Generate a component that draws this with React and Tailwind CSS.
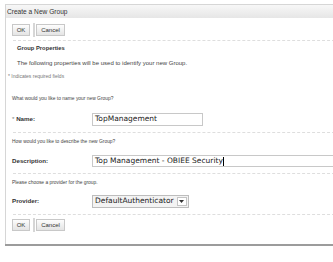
import React from 'react';

const Btn = ({ children, className = '' }) => (
  <button
    className={`h-[12px] border border-[#c8c8c8] bg-gradient-to-b from-[#fdfdfd] to-[#e4e4e4] text-[6px] leading-none text-[#333] ${className}`}
  >
    {children}
  </button>
);

const Buttons = () => (
  <div className="flex items-center h-[14px] pl-[6px]">
    <Btn className="w-[18px]">OK</Btn>
    <div className="w-[2px] h-[14px] bg-[#d6d6d6] ml-[3px] mr-[1px]" />
    <Btn className="w-[29px]">Cancel</Btn>
  </div>
);

const Dashed = ({ className = '' }) => (
  <div className={`h-0 border-t border-dashed border-[#dedede] ml-[7px] ${className}`} />
);

const Line = ({ children, className = '' }) => (
  <div className={`h-[10px] leading-[10px] whitespace-nowrap ${className}`}>{children}</div>
);

const Field = ({ label, children, className = '' }) => (
  <div className={`flex items-center h-[14px] pl-[6px] ${className}`}>
    <div className="w-[80px] text-[6.2px] font-bold text-[#333] whitespace-nowrap">{label}</div>
    {children}
  </div>
);

const App = () => {
  return (
    <div className="w-[333px] h-[262px] bg-white overflow-hidden font-['Liberation_Sans',Arial,sans-serif] text-[#333]">
      <div className="ml-[5px] mt-[4px] w-[340px] border-l border-t border-[#d6d6d6] pb-[12px] shadow-[0_2px_0_#9c9c9c]">
        <div className="h-[13px] bg-gradient-to-b from-[#f7f7f7] to-[#e6e6e6] flex items-center pl-[1px] text-[6.6px] text-[#333] whitespace-nowrap">
          Create a New Group
        </div>
        <div className="pt-[5px]">
          <Buttons />
        </div>
        <Dashed className="mt-[3px]" />

        <Line className="mt-[2px] pl-[11px] text-[5.8px] font-bold">Group Properties</Line>
        <Line className="mt-[5px] pl-[11px] text-[6px] text-[#444]">
          The following properties will be used to identify your new Group.
        </Line>
        <Line className="mt-[3px] pl-[2px] text-[5px] text-[#777]">* Indicates required fields</Line>

        <Line className="mt-[13px] pl-[6px] text-[4.9px] text-[#444]">
          What would you like to name your new Group?
        </Line>
        <Field
          className="mt-[8px]"
          label={
            <>
              <span className="font-normal text-[#777]">* </span>Name:
            </>
          }
        >
          <div className="w-[111px] h-[13px] border border-[#c8c8c8] flex items-center pl-[2px] text-[7.5px] font-['DejaVu_Sans',sans-serif] text-[#222] whitespace-nowrap">
            TopManagement
          </div>
        </Field>
        <Dashed className="mt-[6px]" />

        <Line className="mt-[4px] pl-[6px] text-[4.9px] text-[#444]">
          How would you like to describe the new Group?
        </Line>
        <Field className="mt-[7px]" label="Description:">
          <div className="flex-1 h-[12px] border border-[#c8c8c8] flex items-center pl-[2px] text-[7.5px] font-['DejaVu_Sans',sans-serif] text-[#222] whitespace-nowrap">
            Top Management - OBIEE Security
            <span className="inline-block w-px h-[9px] bg-black" />
          </div>
        </Field>
        <Dashed className="mt-[5px]" />

        <Line className="mt-[4px] pl-[6px] text-[4.9px] text-[#444]">
          Please choose a provider for the group.
        </Line>
        <Field className="mt-[6px]" label="Provider:">
          <div className="h-[13px] border border-[#bdbdbd] bg-[#f3f3f3] flex items-center pl-[2px] text-[7.5px] font-['DejaVu_Sans',sans-serif] text-[#222] whitespace-nowrap">
            DefaultAuthenticator
            <span className="ml-[3px] mr-[1px] w-[10px] h-[9px] border border-[#c4c4c4] bg-white flex items-center justify-center">
              <svg width="5" height="3" viewBox="0 0 5 3">
                <path d="M0 0 L5 0 L2.5 3 Z" fill="#333" />
              </svg>
            </span>
          </div>
        </Field>
        <Dashed className="mt-[6px]" />
        <div className="pt-[3px]">
          <Buttons />
        </div>
      </div>
    </div>
  );
};

export default App;
